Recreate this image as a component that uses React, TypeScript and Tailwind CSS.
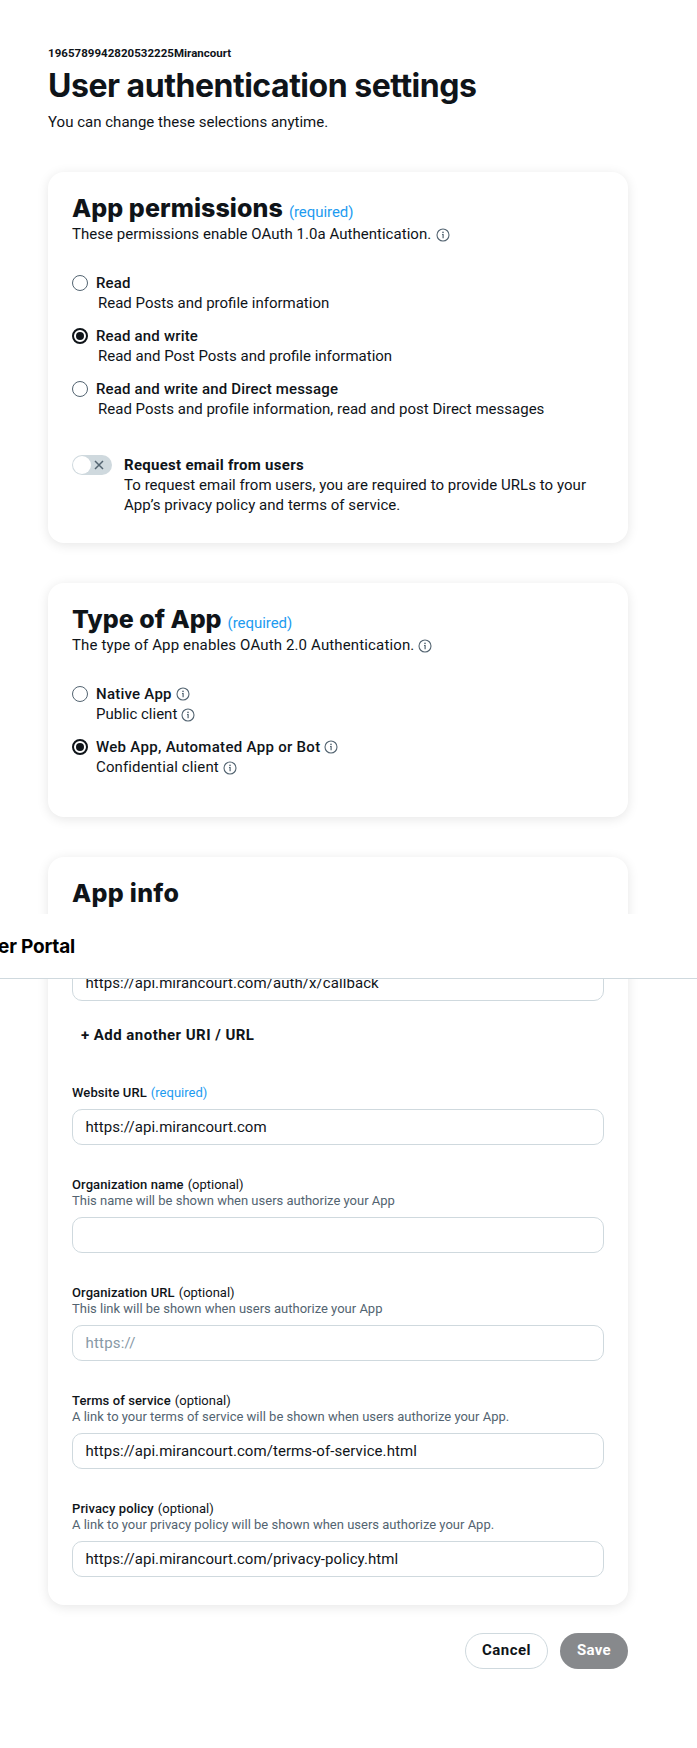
import React from "react";

function InfoIcon({ className = "" }: { className?: string }) {
  return (
    <svg
      viewBox="0 0 14 14"
      className={`h-[14px] w-[14px] shrink-0 ${className}`}
      fill="none"
      stroke="#536471"
      aria-hidden="true"
    >
      <circle cx="7" cy="7" r="6" strokeWidth="1.1" />
      <path d="M6 6.5h1.1v3.8" strokeWidth="1.2" />
      <circle cx="7" cy="4.4" r="0.8" fill="#536471" stroke="none" />
    </svg>
  );
}

function Radio({ checked = false }: { checked?: boolean }) {
  return checked ? (
    <span className="mt-[2px] flex h-4 w-4 shrink-0 items-center justify-center rounded-full border-2 border-[#0f1419]">
      <span className="h-2 w-2 rounded-full bg-[#0f1419]" />
    </span>
  ) : (
    <span className="mt-[2px] h-4 w-4 shrink-0 rounded-full border border-[#536471]" />
  );
}

type OptionProps = {
  label: string;
  labelClass: string;
  desc: string;
  descClass?: string;
  checked?: boolean;
  info?: boolean;
};

function Option({ label, labelClass, desc, descClass = "", checked, info }: OptionProps) {
  return (
    <div className="flex gap-2">
      <Radio checked={checked} />
      <div className="whitespace-nowrap">
        <div className="flex">
          <span className={`font-medium ${labelClass}`}>{label}</span>
          {info && <InfoIcon className="ml-1 mt-[3px]" />}
        </div>
        <div className="flex">
          <span className={descClass}>{desc}</span>
          {info && <InfoIcon className="ml-1 mt-1" />}
        </div>
      </div>
    </div>
  );
}

function Card({ children, className = "" }: { children: React.ReactNode; className?: string }) {
  return (
    <section className={`rounded-2xl bg-white px-6 pt-6 shadow-[0_2px_12px_rgba(0,0,0,0.1)] ${className}`}>
      {children}
    </section>
  );
}

function CardTitle({ children, className = "", required }: { children: string; className?: string; required?: boolean }) {
  return (
    <div className="flex h-7 items-baseline whitespace-nowrap leading-[24px]">
      <h2 className={`font-[Inter,sans-serif] text-[25px] font-extrabold ${className}`}>{children}</h2>
      {required && <span className="ml-[6px] tracking-[-0.05px] text-[#1d9bf0]">(required)</span>}
    </div>
  );
}

type FieldProps = {
  label: string;
  hint?: string;
  value?: string;
  placeholder?: string;
  required?: boolean;
};

function Field({ label, hint, value, placeholder, required }: FieldProps) {
  return (
    <div className="mt-8 text-[13px] leading-4">
      <div className="flex gap-1 whitespace-nowrap">
        <span className="font-medium tracking-[0.1px]">{label}</span>
        {required ? <span className="text-[#1d9bf0]">(required)</span> : <span>(optional)</span>}
      </div>
      {hint && <div className="whitespace-nowrap text-[#536471]">{hint}</div>}
      <TextBox value={value} placeholder={placeholder} />
    </div>
  );
}

function TextBox({ value, placeholder }: { value?: string; placeholder?: string }) {
  return (
    <div className="mt-2 flex h-9 items-center rounded-[10px] border border-[#cfd9de] px-[12.5px] text-[15px] leading-5 tracking-[0.07px]">
      {value ? <span>{value}</span> : <span className="tracking-[0.2px] text-[#8899a6]">{placeholder}</span>}
    </div>
  );
}

export default function App() {
  return (
    <div className="relative h-[1748px] w-[697px] overflow-hidden bg-white font-[Roboto,sans-serif] text-[15px] leading-5 text-[#0f1419]">
      <main className="ml-12 w-[580px] pt-[45px]">
        <div className="text-[11.5px] font-bold leading-4 tracking-[0.03px]">1965789942820532225Mirancourt</div>
        <h1 className="mt-[7px] whitespace-nowrap font-[Inter,sans-serif] text-[32px] font-bold leading-9 tracking-[-0.48px]">
          User authentication settings
        </h1>
        <p className="mt-2 tracking-[0.02px]">You can change these selections anytime.</p>

        <Card className="mt-10 h-[371px]">
          <CardTitle required className="tracking-[0.07px]">App permissions</CardTitle>
          <div className="flex">
            <span className="tracking-[0.035px]">These permissions enable OAuth 1.0a Authentication.</span>
            <InfoIcon className="ml-[5px] mt-1" />
          </div>
          <div className="mt-[29px] flex flex-col gap-[13px]">
            <Option label="Read" labelClass="tracking-[0.14px]" desc="Read Posts and profile information" descClass="ml-[2px]" />
            <Option
              checked
              label="Read and write"
              labelClass="tracking-[0.17px]"
              desc="Read and Post Posts and profile information"
              descClass="ml-[2px]"
            />
            <Option
              label="Read and write and Direct message"
              labelClass="tracking-[0.17px]"
              desc="Read Posts and profile information, read and post Direct messages"
              descClass="ml-[2px] tracking-[0.015px]"
            />
          </div>
          <div className="mt-9 flex gap-3">
            <span className="flex h-5 w-10 shrink-0 items-center justify-between rounded-full bg-[#cfd9de] pl-px pr-2">
              <span className="h-[18px] w-[18px] rounded-full bg-white" />
              <svg viewBox="0 0 10 10" className="h-[10px] w-[10px]" stroke="#536471" strokeWidth="1.5" fill="none">
                <path d="M1 1l8 8M9 1L1 9" />
              </svg>
            </span>
            <div className="whitespace-nowrap">
              <div className="font-bold tracking-[0.28px]">Request email from users</div>
              <div className="tracking-[0.045px]">To request email from users, you are required to provide URLs to your</div>
              <div className="tracking-[0.045px]">App’s privacy policy and terms of service.</div>
            </div>
          </div>
        </Card>

        <Card className="mt-10 h-[234px]">
          <CardTitle required>Type of App</CardTitle>
          <div className="flex">
            <span className="tracking-[0.14px]">The type of App enables OAuth 2.0 Authentication.</span>
            <InfoIcon className="ml-1 mt-1" />
          </div>
          <div className="mt-[29px] flex flex-col gap-[13px]">
            <Option info label="Native App" labelClass="tracking-[0.24px]" desc="Public client" />
            <Option
              checked
              info
              label="Web App, Automated App or Bot"
              labelClass="tracking-[0.3px]"
              desc="Confidential client"
              descClass="tracking-[0.12px]"
            />
          </div>
        </Card>

        <Card className="mt-10 pb-7">
          <CardTitle className="tracking-[0.3px]">App info</CardTitle>
          <div className="mt-14">
            <TextBox value="https://api.mirancourt.com/auth/x/callback" />
          </div>
          <button className="ml-[9px] mt-6 block font-bold leading-5 tracking-[0.46px]">+ Add another URI / URL</button>
          <div className="mt-10">
            <Field label="Website URL" required value="https://api.mirancourt.com" />
          </div>
          <Field label="Organization name" hint="This name will be shown when users authorize your App" />
          <Field
            label="Organization URL"
            hint="This link will be shown when users authorize your App"
            placeholder="https://"
          />
          <Field
            label="Terms of service"
            hint="A link to your terms of service will be shown when users authorize your App."
            value="https://api.mirancourt.com/terms-of-service.html"
          />
          <Field
            label="Privacy policy"
            hint="A link to your privacy policy will be shown when users authorize your App."
            value="https://api.mirancourt.com/privacy-policy.html"
          />
        </Card>

        <div className="mt-7 flex justify-end gap-3 font-bold leading-5">
          <button className="h-9 w-[83px] rounded-full border border-[#cfd9de] pb-[2px] tracking-[0.5px]">Cancel</button>
          <button className="h-9 w-[68px] rounded-full bg-[#87898c] pb-[2px] tracking-[0.3px] text-white">Save</button>
        </div>
      </main>

      <header className="absolute left-0 top-[914px] flex h-[65px] w-full items-center border-b border-[#cfd9de] bg-white">
        <div className="mt-[2px] flex w-[75px] justify-end overflow-hidden whitespace-nowrap font-[Inter,sans-serif] text-[19px] font-bold leading-6 tracking-[-0.2px] text-black">
          er Portal
        </div>
      </header>
    </div>
  );
}
